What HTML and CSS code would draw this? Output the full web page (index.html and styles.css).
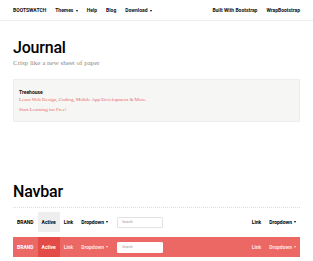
FILE: index.html
```html
<!DOCTYPE html>
<html lang="en">
<head>
    <meta charset="UTF-8">
    <meta name="viewport" content="width=device-width, initial-scale=1.0">
    <title>Bootswatch: Journal</title>
    <link rel="stylesheet" href="styles.css">
</head>
<body>
    <!-- Top site bar -->
    <nav class="topbar">
        <div class="topbar-inner">
            <ul class="top-links">
                <li class="top-brand">BOOTSWATCH</li>
                <li>Themes <span class="caret"></span></li>
                <li>Help</li>
                <li>Blog</li>
                <li>Download <span class="caret"></span></li>
            </ul>
            <ul class="top-links">
                <li>Built With Bootstrap</li>
                <li>WrapBootstrap</li>
            </ul>
        </div>
    </nav>

    <div class="container">
        <header class="page-title">
            <h1>Journal</h1>
            <p class="lead">Crisp like a new sheet of paper</p>
        </header>

        <div class="well">
            <h4>Treehouse</h4>
            <p>Learn Web Design, Coding, Mobile App Development &amp; More.</p>
            <p>Start Learning for Free!</p>
        </div>

        <h1 class="section-title">Navbar</h1>

        <div class="navbar navbar-default">
            <ul class="nav-group">
                <li class="brand">BRAND</li>
                <li class="active">Active</li>
                <li>Link</li>
                <li>Dropdown <span class="caret"></span></li>
                <li class="search"><input type="text" placeholder="Search"></li>
            </ul>
            <ul class="nav-group">
                <li>Link</li>
                <li>Dropdown <span class="caret"></span></li>
            </ul>
        </div>

        <div class="navbar navbar-inverse">
            <ul class="nav-group">
                <li class="brand">BRAND</li>
                <li class="active">Active</li>
                <li>Link</li>
                <li>Dropdown <span class="caret"></span></li>
                <li class="search"><input type="text" placeholder="Search"></li>
            </ul>
            <ul class="nav-group">
                <li>Link</li>
                <li>Dropdown <span class="caret"></span></li>
            </ul>
        </div>
    </div>
</body>
</html>
```

FILE: styles.css
```css
* {
    margin: 0;
    padding: 0;
    box-sizing: border-box;
}

body {
    font-family: "Liberation Serif", Georgia, serif;
    background-color: #ffffff;
    color: #222222;
}

ul {
    list-style: none;
}

/* top site bar */
.topbar {
    height: 21px;
    border-bottom: 1px solid #ececec;
    background-color: #ffffff;
}

.topbar-inner {
    display: flex;
    justify-content: space-between;
    padding: 0 13px;
    height: 20px;
}

.top-links {
    display: flex;
    align-items: center;
    gap: 9px;
}

.top-links li {
    font-family: Roboto, "Liberation Sans", sans-serif;
    font-size: 5px;
    font-weight: 700;
    line-height: 20px;
    color: #111111;
}

.caret {
    display: inline-block;
    width: 0;
    height: 0;
    margin-left: 1px;
    vertical-align: middle;
    border-top: 2px solid currentColor;
    border-left: 1.5px solid transparent;
    border-right: 1.5px solid transparent;
}

/* page content */
.container {
    padding: 0 13px;
}

.page-title h1,
.section-title {
    font-family: Roboto, "Liberation Sans", sans-serif;
    font-size: 16px;
    font-weight: 500;
    line-height: 18px;
    color: #000000;
    letter-spacing: -0.2px;
}

.page-title h1 {
    margin-top: 18px;
}

.lead {
    margin-top: 2px;
    font-size: 7px;
    line-height: 9px;
    color: #8a8a8a;
}

.well {
    margin-top: 11px;
    padding: 9px 5px 8px;
    background-color: #f6f6f5;
    border: 1px solid #eeeeee;
}

.well h4 {
    font-family: Roboto, "Liberation Sans", sans-serif;
    font-size: 5px;
    font-weight: 700;
    line-height: 7px;
    color: #111111;
}

.well p {
    font-size: 5px;
    line-height: 7px;
    color: #eb6864;
    margin-bottom: 3px;
}

.well p:last-child {
    margin-bottom: 0;
}

.section-title {
    margin-top: 61px;
    padding-bottom: 6px;
    border-bottom: 1px dotted #dddddd;
}

/* navbars */
.navbar {
    display: flex;
    justify-content: space-between;
    height: 20px;
    margin-top: 4px;
}

.navbar-inverse {
    margin-top: 5px;
    background-color: #eb6864;
}

.nav-group {
    display: flex;
    align-items: stretch;
}

.nav-group li {
    display: flex;
    align-items: center;
    padding: 0 4px;
    font-family: Roboto, "Liberation Sans", sans-serif;
    font-size: 5px;
    font-weight: 700;
    color: #000000;
    white-space: nowrap;
}

.nav-group li .caret {
    margin-left: 2px;
}

.nav-group li.search {
    padding: 0 0 0 5px;
}

.search input {
    width: 46px;
    height: 11px;
    padding: 0 4px;
    border: 1px solid #e2e2e2;
    border-radius: 1px;
    background-color: #ffffff;
    font-family: Roboto, "Liberation Sans", sans-serif;
    font-size: 3.5px;
    outline: none;
}

.search input::placeholder {
    color: #9a9a9a;
}

.navbar-default .active {
    background-color: #eeeeee;
}

.navbar-inverse .nav-group li {
    color: #fde3e2;
}

.navbar-inverse .nav-group li.brand,
.navbar-inverse .nav-group li.active {
    color: #ffffff;
}

.navbar-inverse .active {
    background-color: #e34b47;
}

.navbar-inverse .search input {
    border-color: #ffffff;
}
```
